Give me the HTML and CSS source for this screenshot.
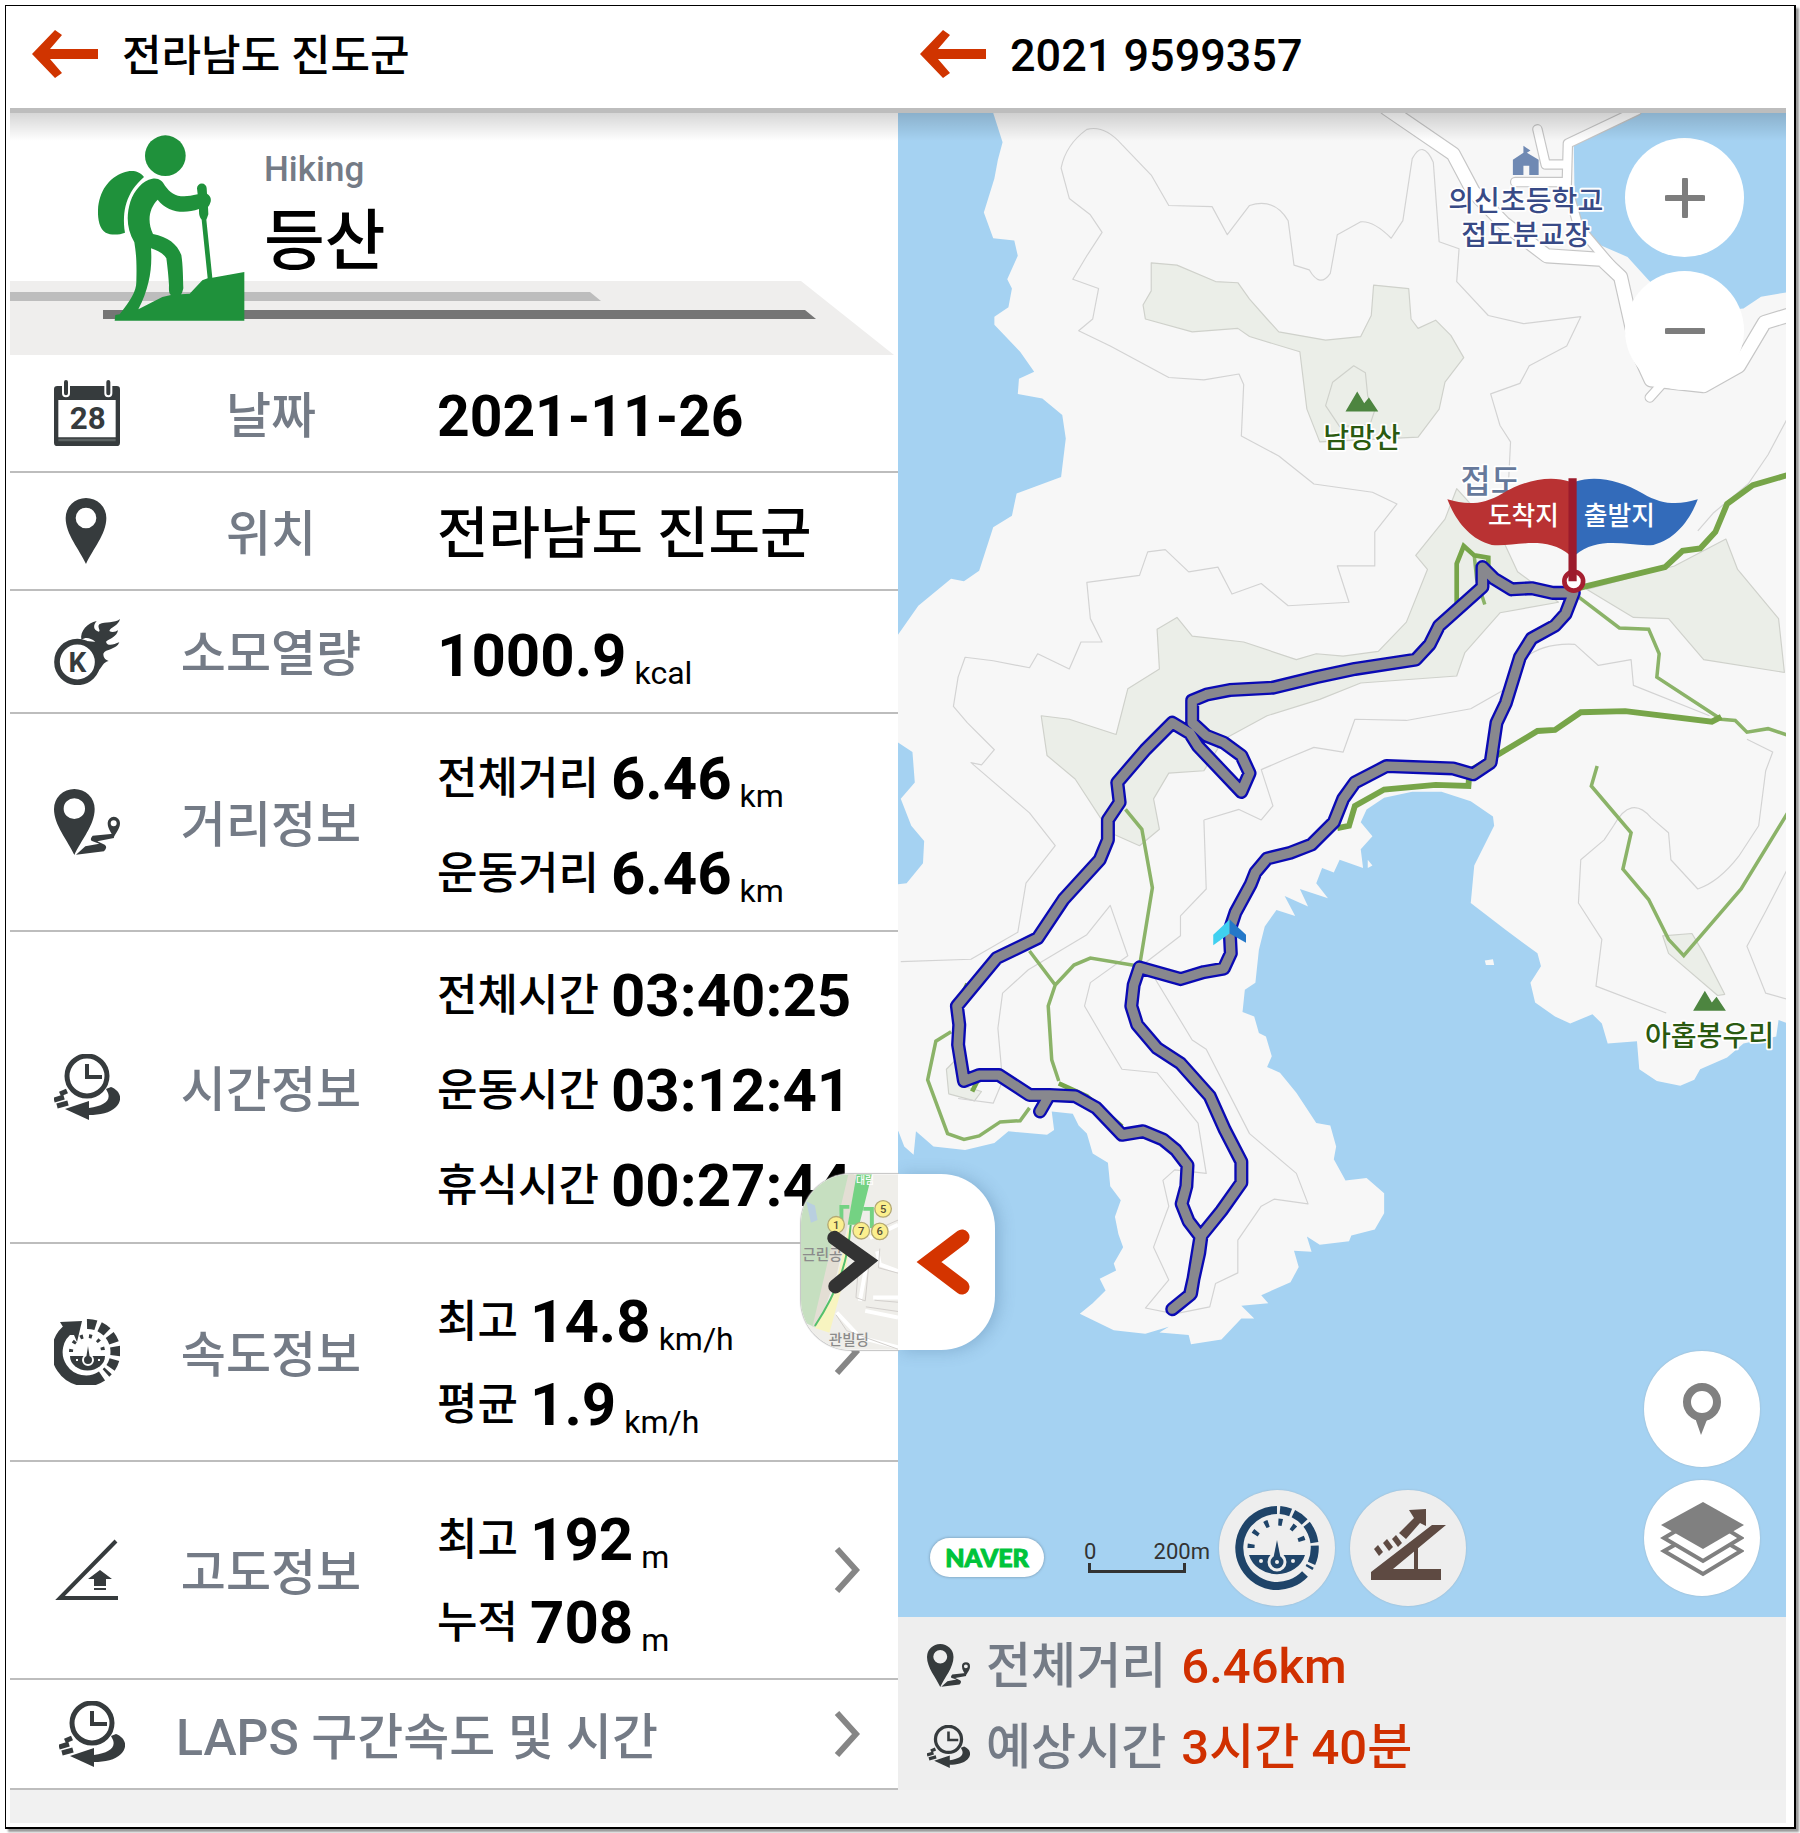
FILE: index.html
```html
<!DOCTYPE html>
<html lang="ko">
  <head>
    <meta charset="UTF-8" />
    <meta name="viewport" content="width=device-width, initial-scale=1" />
    <title>전라남도 진도군</title>
    <link rel="stylesheet" href="styles.css">
  </head>
  <body>
    <svg class="symbols" aria-hidden="true">
      <symbol id="i-back" viewBox="0 0 66 48">
        <path d="M66 19H18L30 5 23 0 0 24 23 48 30 43 18 29H66Z" fill="#d03400"/>
      </symbol>
      <symbol id="i-pin" viewBox="42 381 198 198">
        <path fill-rule="evenodd" d="M138 579C118 535 77 490 77 441a61 60 0 0 1 122 0c0 49-41 94-61 138ZM138 410a31 31 0 1 0 0 62 31 31 0 0 0 0-62Z" fill="#363b3d"/>
      </symbol>
      <symbol id="i-route" viewBox="42 1256 198 198">
        <path fill-rule="evenodd" d="M103 1454C83 1410 42 1365 42 1316a61 60 0 0 1 122 0c0 49-41 94-61 138ZM103 1284a32 31 0 1 0 0 62 32 31 0 0 0 0-62Z" fill="#363b3d"/>
        <path fill-rule="evenodd" d="M221 1402C214 1386 203 1376 203 1358a18 18 0 0 1 37 0c0 18-12 28-19 44ZM221 1350a9 9 0 1 0 0 18 9 9 0 0 0 0-18Z" fill="#363b3d"/>
        <path d="M220 1390 158 1396q-10 12-2 16l22 8-42 8-28 25 84-10q12-14 2-20l-22-10 50-10Z" fill="#363b3d"/>
      </symbol>
      <symbol id="i-clock" viewBox="0 0 66 66">
        <circle cx="33" cy="22" r="20" fill="none" stroke="#363b3d" stroke-width="5"/>
        <path d="M33 10v13h15" fill="none" stroke="#363b3d" stroke-width="4"/>
        <path d="M11 55 35 47v7C49 52 57 47 54 39l-2-4 5-2C67 37 69 46 62 53 56 59 46 61 35 61v5Z" fill="#363b3d"/>
        <path d="M13 37 6 40M10 43 0 46M14 49 3 52" stroke="#363b3d" stroke-width="5"/>
      </symbol>
      <symbol id="i-speed" viewBox="0 0 66 66">
        <path d="M16 9A28 28 0 1 0 48 57" fill="none" stroke="#363b3d" stroke-width="11"/>
        <path d="M6 3 28 2 23 23 20 16 14 16Z" fill="#363b3d"/>
        <path d="M33 5A28 28 0 0 1 52 54" fill="none" stroke="#363b3d" stroke-width="10" stroke-dasharray="9 4"/>
        <path d="M17 33A16 16 0 0 1 49 33" fill="none" stroke="#363b3d" stroke-width="4" stroke-dasharray="3 6"/>
        <path d="M16 37H51A17 14 0 0 1 16 37Z" fill="#363b3d"/>
        <circle cx="34" cy="41" r="5" fill="#363b3d" stroke="#fff" stroke-width="2"/>
        <path d="M32 40 34 27 36 40Z" fill="#363b3d"/>
        <path d="M22 41h2M44 41h2" stroke="#fff" stroke-width="2"/>
      </symbol>
      <symbol id="i-altitude" viewBox="0 0 66 66">
        <path d="M64 61H6L62 4" fill="none" stroke="#363b3d" stroke-width="4"/>
        <path d="M46 33 58 42H52V49H40V42H34ZM40 51h12v2H40Z" fill="#363b3d"/>
      </symbol>
      <symbol id="i-chevron" viewBox="0 0 26 46">
        <path d="M3 2 22 23 3 44" fill="none" stroke="#868686" stroke-width="6"/>
      </symbol>
    </svg>

    <div class="frame">
      <div class="panels">
        <section class="panel">
          <header class="topbar">
            <a href="#" class="back" aria-label="뒤로"><svg><use href="#i-back"/></svg></a>
            <h1>전라남도 진도군</h1>
          </header>
          <div class="hero">
            <svg class="banner" viewBox="0 0 888 74" preserveAspectRatio="none">
              <path d="M0 0H791L884 74H0Z" fill="#efeeed"/>
              <path d="M0 11H580L591 20H0Z" fill="#bdbdbd"/>
              <path d="M93 29H795L806 38H93Z" fill="#757575"/>
            </svg>
            <svg class="hiker" viewBox="50 30 444 558" fill="#1f913b">
              <circle cx="255" cy="92" r="61"/>
              <path d="M191 156C176 136 152 134 128 143 86 158 56 198 53 255 52 285 58 312 76 323 92 331 116 330 134 323 124 258 138 202 191 156Z"/>
              <path d="M216 161C236 158 246 168 254 182 274 210 296 222 352 208L350 190A14 14 0 0 1 379 190L380 206Q394 214 391 230 388 240 383 246L384 268Q380 280 378 284L396 458 492 441V587H103L105 570 118 568C150 525 168 500 168 470 170 400 166 380 162 352 138 310 138 270 150 230 162 196 186 166 216 161ZM232 224C206 250 200 290 218 327 262 336 290 356 303 390 308 420 308 460 309 490 306 500 306 504 302 508L328 506 366 466 382 460 364 284Q355 276 356 252C310 268 262 262 232 224ZM212 370C216 430 208 486 174 553L246 516 272 510C264 504 266 490 266 480 264 450 262 430 258 400 250 386 232 376 212 370Z" fill-rule="evenodd"/>
            </svg>
            <div class="sport">
              <span class="sport-en">Hiking</span>
              <strong class="sport-ko">등산</strong>
            </div>
          </div>

          <ul class="stats">
            <li class="row row-date">
              <svg class="icon" viewBox="42 30 198 198">
                <path d="M42 58q0-10 10-10h178q10 0 10 10v160q0 10-10 10H52q-10 0-10-10Z" fill="#363b3d"/>
                <path d="M55 90h172v112H55Z" fill="#fff"/>
                <path d="M55 210h172" stroke="#5c6363" stroke-width="8"/>
                <path d="M78 36v34M205 36v34" stroke="#fff" stroke-width="24" stroke-linecap="round"/>
                <path d="M78 36v34M205 36v34" stroke="#363b3d" stroke-width="12" stroke-linecap="round"/>
                <text x="143" y="178" font-size="94" font-weight="700" fill="#363b3d" text-anchor="middle">28</text>
              </svg>
              <span class="label">날짜</span>
              <div class="values"><p><b class="date">2021-11-26</b></p></div>
            </li>
            <li class="row row-place">
              <svg class="icon"><use href="#i-pin"/></svg>
              <span class="label">위치</span>
              <div class="values"><p><b class="place">전라남도 진도군</b></p></div>
            </li>
            <li class="row row-kcal">
              <svg class="icon" viewBox="42 744 198 198">
                <circle cx="112" cy="873" r="61" fill="none" stroke="#363b3d" stroke-width="17"/>
                <path d="M124 806C120 780 142 756 170 750 160 762 158 776 176 782 184 780 170 768 178 760 196 750 224 758 240 744 236 764 212 768 208 780 216 786 228 782 234 778 232 796 208 804 198 812 202 828 222 820 238 814 230 836 196 834 190 848 190 862 198 866 206 870 190 872 186 890 172 902L164 850C150 830 140 826 136 816 144 806 156 814 166 812 150 800 138 798 124 806Z" fill="#363b3d"/>
                <text x="112" y="903" font-size="84" font-weight="700" fill="#363b3d" text-anchor="middle">K</text>
              </svg>
              <span class="label">소모열량</span>
              <div class="values"><p><b>1000.9</b> <small>kcal</small></p></div>
            </li>
            <li class="row">
              <svg class="icon"><use href="#i-route"/></svg>
              <span class="label">거리정보</span>
              <div class="values">
                <p><span>전체거리</span> <b>6.46</b> <small>km</small></p>
                <p><span>운동거리</span> <b>6.46</b> <small>km</small></p>
              </div>
            </li>
            <li class="row row-time">
              <svg class="icon"><use href="#i-clock"/></svg>
              <span class="label">시간정보</span>
              <div class="values">
                <p><span>전체시간</span> <b>03:40:25</b></p>
                <p><span>운동시간</span> <b>03:12:41</b></p>
                <p><span>휴식시간</span> <b>00:27:44</b></p>
              </div>
            </li>
            <li class="row">
              <svg class="icon"><use href="#i-speed"/></svg>
              <span class="label">속도정보</span>
              <div class="values tight">
                <p><span>최고</span> <b>14.8</b> <small>km/h</small></p>
                <p><span>평균</span> <b>1.9</b> <small>km/h</small></p>
              </div>
              <a href="#" class="more" aria-label="속도정보"><svg><use href="#i-chevron"/></svg></a>
            </li>
            <li class="row">
              <svg class="icon"><use href="#i-altitude"/></svg>
              <span class="label">고도정보</span>
              <div class="values tight">
                <p><span>최고</span> <b>192</b> <small>m</small></p>
                <p><span>누적</span> <b>708</b> <small>m</small></p>
              </div>
              <a href="#" class="more" aria-label="고도정보"><svg><use href="#i-chevron"/></svg></a>
            </li>
            <li class="row row-laps">
              <svg class="icon"><use href="#i-clock"/></svg>
              <span class="label">LAPS 구간속도 및 시간</span>
              <a href="#" class="more" aria-label="LAPS"><svg><use href="#i-chevron"/></svg></a>
            </li>
          </ul>

          <button type="button" class="tab tab-map" aria-label="지도 보기">
            <svg viewBox="62 38 293 529">
              <rect x="62" y="38" width="293" height="529" fill="#efeeea"/>
              <path d="M62 38H222L105 500 62 480Z" fill="#c6dfc0"/>
              <path d="M78 120 104 132 112 176 92 184Z" fill="#b9cfe0"/>
              <path d="M205 38H236L170 340 124 470 96 500Z" fill="#e3ded4"/>
              <path d="M216 200H205L160 400 104 502 148 516 196 340Z" fill="#f8f4c0"/>
              <path d="M212 190C205 290 180 380 104 496" fill="none" stroke="#54c06c" stroke-width="6"/>
              <path d="M230 38H276L238 190H203Z" fill="#74d283"/>
              <path d="M184 180V136H208M250 142H276V200" fill="none" stroke="#74d283" stroke-width="12"/>
              <path d="M270 230 355 190M262 300 240 420M280 410H355M256 450 355 470M292 270 300 310 355 330M170 455 240 530 355 560" fill="none" stroke="#fff" stroke-width="12"/>
              <path d="M240 260 228 410 256 420 266 320M355 176 300 200M284 418 355 424M258 438 355 452M168 462 200 510 355 566M300 262 296 320 355 336" fill="none" stroke="#d2cfcc" stroke-width="3"/>
              <g fill="#fbef8e" stroke="#b3a873" stroke-width="4">
                <circle cx="310" cy="142" r="25"/><circle cx="168" cy="190" r="25"/><circle cx="244" cy="208" r="25"/><circle cx="300" cy="210" r="25"/>
              </g>
              <g font-size="34" text-anchor="middle" fill="#57503a">
                <text x="310" y="154">5</text><text x="168" y="202">1</text><text x="244" y="220">7</text><text x="300" y="222">6</text>
              </g>
              <g font-size="44" fill="#8b8b8b">
                <text x="66" y="298">근린공</text><text x="146" y="553">관빌딩</text>
                <text x="228" y="68" font-size="30" fill="#fff">대림</text>
              </g>
              <path d="M163 230 260 299 166 376" fill="none" stroke="#333" stroke-width="43" stroke-linecap="round"/>
            </svg>
          </button>
        </section>

        <section class="panel">
          <header class="topbar">
            <a href="#" class="back" aria-label="뒤로"><svg><use href="#i-back"/></svg></a>
            <h1 class="number">2021 9599357</h1>
          </header>
          <div class="map">
            <svg class="chart" viewBox="768 98 760 1285" preserveAspectRatio="xMidYMid slice">
              <!-- land -->
              <path fill="#f7f7f7" d="M850 98 858 123 854 138 851 154 842 183 850 205 868 207 871 220 862 240 866 248 863 264 851 272 851 279 873 302 885 319 872 325 871 338 892 342 909 356 912 376 908 409 870 423 866 442 850 452 838 489 825 498 814 496 786 519 760 556V970L769 968 774 981 782 988 784 968 799 981 826 984 851 978 863 968 896 971 902 967 900 951 918 953 923 963 930 970 935 987 948 995 950 1015 959 1027 954 1041 957 1056 961 1067 953 1081 955 1087 941 1094 946 1104 935 1115 924 1124 953 1138 980 1141 1000 1135 992 1140 1017 1142 1019 1150 1045 1146 1062 1128 1073 1128 1062 1117 1085 1115 1079 1108 1104 1097 1111 1084 1107 1070 1122 1071 1118 1058 1129 1065 1154 1062 1156 1057 1176 1052 1184 1038 1184 1021 1169 1008 1151 1010 1141 992 1143 981 1138 963 1126 961 1109 935 1095 918 1084 913 1088 904 1083 887 1077 884 1073 870 1063 866 1065 847 1074 841 1077 813 1082 793 1092 779 1108 784 1099 767 1119 776 1112 761 1136 769 1126 756 1131 743 1141 747 1146 736 1166 743 1164 727 1174 716 1164 704 1169 693 1184 683 1208 678 1233 678 1258 686 1277 699 1278 707 1261 741 1258 773 1288 796 1315 816 1318 827 1309 841 1313 858 1330 870 1343 876 1362 868 1370 876 1375 893 1400 891 1402 915 1417 925 1437 929 1449 924 1454 915 1477 905 1491 893 1519 887 1521 873 1540 880V249L1529 251 1506 255 1491 265 1440 270 1410 241 1392 221 1362 208 1347 191 1346 123 1370 111 1400 98Z"/>
              <path fill="#a5d2f2" d="M760 632 769 636 781 644 783 670 771 684 780 707 791 720 790 739 776 756 760 758Z"/>
              <path fill="#f7f7f7" d="M1270 822l7-1 1 5-7 0ZM1170 736l4 5-4 2Z"/>
              <!-- woods -->
              <g fill="#ebeee8" stroke="#cfd1cb" stroke-linejoin="round">
                <path d="M985 226 1007 228 1040 242 1059 243 1069 257 1084 274 1094 285 1134 292 1164 289 1173 271 1175 245 1205 248 1207 274 1213 282 1228 275 1241 288 1252 307 1236 328 1231 351 1213 375 1129 379 1118 351 1112 302 1069 289 1059 282 1020 285 980 274 978 262 985 250Z"/>
                <path d="M1246 419 1236 445 1211 476 1221 488 1203 533 1179 558 1149 562 1126 560 1109 565 1064 550 1020 545 1007 529 990 539 992 573 965 590 955 629 915 616 891 613 896 647 920 667 950 713 975 724 992 710 987 684 1000 662 1030 660 1047 633 1084 613 1129 599 1164 585 1246 579 1253 559 1283 525 1333 516 1298 490 1285 462Z"/>
                <path d="M1357 505 1432 485 1476 462 1486 488 1521 530 1526 576 1457 565 1427 530 1397 529Z"/>
                <path d="M1422 801 1447 799 1457 816 1475 851 1469 852 1427 816Z"/>
                <path d="M1134 348 1140 328 1158 314 1168 320 1170 340 1176 352 1172 364 1146 366Z" fill="none"/>
                <path d="M820 905 826 930 840 934 834 942 812 936 810 915Z"/>
              </g>
              <!-- contour lines -->
              <g fill="none" stroke="#d3d3d3" stroke-linejoin="round">
                <path d="M1290 419 1292 379 1283 365 1275 338 1300 329 1308 314 1340 297 1352 272 1303 278 1273 271 1246 242 1248 214 1231 208 1226 140Q1217 120 1208 137L1200 190 1190 205Q1175 190 1164 191L1144 202 1138 235Q1129 248 1120 232L1107 228 1102 190Q1090 170 1069 177L1050 202 1037 178 1000 177 985 151 960 125Q945 108 930 112 912 125 908 145L915 171 933 185 943 200 930 220 918 240 940 248 935 274 923 284 950 297 1000 324 1030 326 1060 321 1064 330 1062 374 1094 391 1124 415 1174 422 1195 432 1176 456 1176 485 1144 485 1154 516 1102 519 1079 500 1054 509 1042 486 1017 490 997 471 982 473 975 493 930 499 933 530 943 550 925 550 915 573 888 560 881 572 850 566 826 563 820 580 816 605 828 619 851 642 840 655 831 653 881 696 903 724 878 756 871 798 831 821 771 823"/>
                <path d="M1293 576Q1310 550 1347 552L1367 570 1395 565 1397 587 1462 613M1030 702 1032 761 1010 784 1010 801 980 824 1020 890 1032 898 1069 970 1109 1004 1119 1030 1090 1026 1079 1032 1059 1061 1059 1089 1040 1098 1035 1118 1005 1124 980 1119 1000 1095 987 1067 1000 1032 995 1010 1005 1001 1032 1004 1025 961 990 918 960 915 945 890 928 861 933 841 965 818 950 775 930 800 880 830 858 850 854 880 858 925 850 944 820 940M1030 702 1060 693 1079 702 1089 690 1079 659 1100 650 1124 640 1149 644 1159 616 1203 617 1258 607 1288 590"/>
                <path d="M1380 707Q1395 680 1412 700L1427 713 1429 736 1452 761Q1470 755 1487 733L1504 707 1510 660 1516 644 1494 633M1380 707 1372 719 1352 736 1350 773 1370 804 1365 844 1425 867M1528 745 1510 780 1494 810 1510 850 1528 855M1528 360 1512 390 1495 415 1465 440 1452 455"/>
              </g>
              <!-- roads -->
              <g fill="none" stroke-linejoin="round" stroke-linecap="round">
                <path stroke="#c6c6c6" stroke-width="13" d="M1186 94 1243 133 1260 165 1286 192 1323 220 1370 223 1386 238 1400 300 1412 326 1457 331 1487 314 1509 277 1532 270"/>
                <path stroke="#c6c6c6" stroke-width="9" d="M1400 96 1341 124 1340 160 1350 195 1378 228M1315 112 1322 142 1340 142M1296 157H1336M1420 331 1411 341"/>
                <path stroke="#fff" stroke-width="11" d="M1186 94 1243 133 1260 165 1286 192 1323 220 1370 223 1386 238 1400 300 1412 326 1457 331 1487 314 1509 277 1532 270"/>
                <path stroke="#fff" stroke-width="7" d="M1400 96 1341 124 1340 160 1350 195 1378 228M1315 112 1322 142 1340 142M1296 157H1336M1420 331 1411 341"/>
              </g>
              <!-- trails -->
              <path fill="none" stroke="#8bb368" stroke-width="3" d="M1347 509 1385 538 1410 539 1419 560 1417 580 1472 616 1484 617 1494 627 1512 624 1530 630M1366 656 1361 673 1395 713 1388 744 1410 770 1427 804 1440 818 1489 761 1530 694M963 693 977 710 986 760 975 827 933 820 919 826 903 843 881 814M903 843 897 861 900 907 906 925M814 883 801 891 794 924 811 970 825 975 838 972 856 960 873 959 881 948M1261 476 1263 496 1270 518"/>
              <path fill="none" stroke="#77a549" stroke-width="5" d="M1530 407 1499 416 1477 432 1467 456 1454 470 1439 472 1424 486 1350 504M1472 614 1464 618 1390 609 1352 610 1330 625 1315 626 1280 647 1257 660 1256 673 1228 672 1184 676 1159 690 1154 707 1144 709"/>
              <path fill="none" stroke="#77a549" stroke-width="4" d="M1246 519V483L1252 468 1261 476 1273 478V490M906 927 930 938 960 964M832 934 838 922 855 922M828 842 822 855"/>
              <!-- recorded track -->
              <g fill="none" stroke-linejoin="round" stroke-linecap="round">
                <path stroke="#0a0ab4" stroke-width="12" d="M1346 508 1328 508 1310 504 1293 505 1278 496 1268 486V503L1231 536 1223 552 1211 565 1159 573 1126 580 1089 589 1052 591 1032 595 1020 600V619L1032 630 1047 636 1062 647 1069 662 1062 678 1025 639 1018 628 1003 619 980 642 956 670 958 687 948 702V719L941 736 910 770 888 803 853 820 819 861 821 877 820 894 825 925 838 920H855L881 937H898L890 951 898 937 920 938 938 948 960 971 978 968 995 975 1006 984 1016 997 1015 1015 1011 1030 1017 1045 1027 1058 1019 1107 1003 1120 1018 1108 1026 1072 1028 1057 1045 1036 1062 1012V994L1048 967 1035 938 1010 910 990 897 973 877 968 861 970 843 975 828 1010 838 1030 832 1047 829 1053 816 1052 796 1057 781 1070 757 1074 747 1084 735 1104 730 1122 723 1141 704 1149 684 1159 670 1186 656 1243 658 1260 663 1275 653 1280 619 1288 602 1300 563 1310 547 1330 536 1339 526 1346 508"/>
                <path stroke="#88888e" stroke-width="8" d="M1346 508 1328 508 1310 504 1293 505 1278 496 1268 486V503L1231 536 1223 552 1211 565 1159 573 1126 580 1089 589 1052 591 1032 595 1020 600V619L1032 630 1047 636 1062 647 1069 662 1062 678 1025 639 1018 628 1003 619 980 642 956 670 958 687 948 702V719L941 736 910 770 888 803 853 820 819 861 821 877 820 894 825 925 838 920H855L881 937H898L890 951 898 937 920 938 938 948 960 971 978 968 995 975 1006 984 1016 997 1015 1015 1011 1030 1017 1045 1027 1058 1019 1107 1003 1120 1018 1108 1026 1072 1028 1057 1045 1036 1062 1012V994L1048 967 1035 938 1010 910 990 897 973 877 968 861 970 843 975 828 1010 838 1030 832 1047 829 1053 816 1052 796 1057 781 1070 757 1074 747 1084 735 1104 730 1122 723 1141 704 1149 684 1159 670 1186 656 1243 658 1260 663 1275 653 1280 619 1288 602 1300 563 1310 547 1330 536 1339 526 1346 508"/>
              </g>
              <path d="M1052 787 1038 800V809L1052 799Z" fill="#3fd0f0"/>
              <path d="M1052 787 1066 800V807L1052 799Z" fill="#2478c8"/>
              <!-- places -->
              <path d="M1151 353 1161 336 1167 346 1171 341 1179 353ZM1448 865 1458 848 1464 858 1468 853 1476 865Z" fill="#4d8540"/>
              <path d="M1294 151V138L1303 132V126L1309 130 1306 132 1316 138V151H1308V143H1303V151Z" fill="#6f89b3"/>
              <g class="place-name" font-size="24" text-anchor="middle">
                <text x="1165" y="384" fill="#2a5a10">남망산</text>
                <text x="1462" y="895" fill="#2a5a10">아홉봉우리</text>
                <text x="1305" y="182" fill="#384a86">의신초등학교</text>
                <text x="1305" y="211" fill="#384a86">접도분교장</text>
                <text x="1275" y="423" font-size="28" fill="#66799b">접도</text>
              </g>
              <!-- flags -->
              <path d="M1343 413C1325 407 1304 412 1285 423 1268 433 1254 433 1238 428 1244 444 1256 462 1276 467 1295 469 1322 458 1343 476Z" fill="#b93233"/>
              <path d="M1347 413C1365 407 1386 412 1405 423 1422 433 1436 433 1452 428 1446 444 1434 462 1414 467 1395 469 1368 458 1347 476Z" fill="#336bba"/>
              <circle cx="1346" cy="498" r="8" fill="#fff" stroke="#a51f30" stroke-width="4"/>
              <path d="M1345 410V498" stroke="#9c1b2c" stroke-width="7"/>
              <g font-size="22" fill="#fff" text-anchor="middle">
                <text x="1303" y="450">도착지</text>
                <text x="1385" y="450">출발지</text>
              </g>
            </svg>

            <div class="controls zoom">
              <button type="button" class="round large" aria-label="확대">
                <svg viewBox="0 0 40 40"><path d="M20 2V38M2 20H38" stroke="#7d7d7d" stroke-width="6" stroke-linecap="round"/></svg>
              </button>
              <button type="button" class="round large" aria-label="축소">
                <svg viewBox="0 0 40 40"><path d="M2 20H38" stroke="#7d7d7d" stroke-width="6" stroke-linecap="round"/></svg>
              </button>
            </div>

            <div class="controls layers">
              <button type="button" class="round" aria-label="현재 위치">
                <svg class="wide" viewBox="0 0 84 84">
                  <path d="M33 45 41 68 50 45Z" fill="#808080"/>
                  <circle cx="42" cy="35" r="15" fill="#fff" stroke="#808080" stroke-width="8"/>
                </svg>
              </button>
              <button type="button" class="round" aria-label="지도 종류">
                <svg class="wide" viewBox="0 0 84 84">
                  <path d="M4 55 43 33 81 55 43 78Z" fill="#fff" stroke="#808080" stroke-width="4"/>
                  <path d="M4 42 43 19 81 42 43 65Z" fill="#fff" stroke="#808080" stroke-width="4"/>
                  <path d="M1 29 43 6 84 29 43 53Z" fill="#808080"/>
                </svg>
              </button>
            </div>

            <div class="legend">
              <a href="#" class="naver">NAVER</a>
              <div class="scale"><span>0</span><span>200m</span></div>
              <button type="button" class="round grey" aria-label="속도">
                <svg class="wide" viewBox="0 0 84 84">
                  <g fill="none" stroke="#1f4469">
                    <path d="M42 4A38 38 0 1 0 70 68" stroke-width="8"/>
                    <path d="M45 4A38 38 0 0 1 74 62" stroke-width="8" stroke-dasharray="11 3 14 3 20 3 18 3"/>
                    <path d="M16 42A26 26 0 0 1 68 42" stroke-width="7" stroke-dasharray="4 10"/>
                  </g>
                  <path d="M14 49H70A29 26 0 0 1 14 49Z" fill="#1f4469"/>
                  <circle cx="42" cy="56" r="8" fill="#1f4469" stroke="#eee" stroke-width="3"/>
                  <path d="M38 54 42 34 46 54Z" fill="#1f4469"/>
                  <g fill="#eee"><circle cx="42" cy="56" r="2"/><circle cx="26" cy="55" r="2"/><circle cx="58" cy="55" r="2"/></g>
                </svg>
              </button>
              <button type="button" class="round grey" aria-label="고도">
                <svg class="wide" viewBox="0 0 84 84">
                  <g fill="#5e4a42">
                    <path d="M5 66 66 19H80L27 63H75V74H5ZM48 40H52V66H48Z"/>
                    <path d="M33 27 48 12 43 4 60 3V20L54 17 40 33Z"/>
                    <path d="M26 33 30 29 36 37 32 41ZM17 37 21 33 27 41 23 45ZM8 43 12 39 17 46 13 50Z"/>
                  </g>
                </svg>
              </button>
            </div>

            <button type="button" class="tab tab-info" aria-label="정보 보기">
              <svg viewBox="0 0 54 66"><path d="M46 8 13 33 46 58" fill="none" stroke="#d43400" stroke-width="15" stroke-linecap="round"/></svg>
            </button>
          </div>
          <footer class="summary">
            <p><svg><use href="#i-route"/></svg><span>전체거리</span><b>6.46km</b></p>
            <p><svg><use href="#i-clock"/></svg><span>예상시간</span><b>3시간 40분</b></p>
          </footer>
        </section>
      </div>
      <div class="bottom"></div>
    </div>
  </body>
</html>
```
FILE: styles.css
```css
* { box-sizing: border-box; }
body {
	margin: 0;
	padding: 5px 4px 5px 5px;
	background: #fff;
	color: #000;
	font-family: Roboto, "Noto Sans CJK KR", sans-serif;
	font-weight: 500;
}
h1, p, ul { margin: 0; padding: 0; }
ul { list-style: none; }
a { text-decoration: none; }
button { padding: 0; border: none; font: inherit; cursor: pointer; }
svg { display: block; }
.symbols { position: absolute; width: 0; height: 0; }

.frame {
	border: 1px solid #000;
	border-right-width: 2px;
	border-bottom-width: 2px;
	padding: 0 8px 4px 4px;
	box-shadow: 3px 3px 2px #999;
}
.panels {
	display: grid;
	grid-template-columns: 1fr 1fr;
}
.panel {
	position: relative;
	display: flex;
	flex-direction: column;
	min-width: 0;
}
.bottom { height: 33px; background: #f1f1f1; }

/* top bar */
.topbar {
	position: relative;
	display: flex;
	align-items: center;
	gap: 24px;
	height: 107px;
	padding: 0 22px 6px;
	border-bottom: 5px solid #bdbdbd;
}
.topbar::after {
	content: "";
	position: absolute;
	z-index: 1;
	left: 0;
	right: 0;
	top: 107px;
	height: 28px;
	background: linear-gradient(rgba(0, 0, 0, 0.16), rgba(0, 0, 0, 0));
}
.topbar h1 {
	padding-top: 4px;
	font-size: 43px;
	font-weight: 500;
	line-height: 56px;
}
.topbar .number { font-size: 45px; }
.back svg { width: 66px; height: 48px; }

/* hero */
.hero {
	position: relative;
	display: flex;
	gap: 19px;
	height: 242px;
	padding: 22px 0 0 87px;
}
.banner {
	position: absolute;
	left: 0;
	bottom: 0;
	width: 100%;
	height: 74px;
}
.hiker { position: relative; width: 148px; height: 186px; }
.sport { position: relative; padding-top: 13px; }
.sport-en {
	display: block;
	color: #747b86;
	font-size: 35px;
	line-height: 44px;
}
.sport-ko {
	display: block;
	font-size: 66px;
	font-weight: 500;
	line-height: 100px;
}

/* stat rows */
.row {
	display: grid;
	grid-template-columns: 66px 302px 1fr auto;
	align-items: center;
	height: 218px;
	padding: 0 38px 0 44px;
	border-bottom: 2px solid #bdbdbd;
}
.row-date, .row-place { height: 118px; }
.row-kcal { height: 123px; }
.row-time { height: 312px; }
.row-laps {
	grid-template-columns: 66px 1fr auto;
	height: 110px;
	padding-left: 49px;
}
.icon { width: 66px; height: 66px; }
.label {
	padding-top: 7px;
	color: #747b86;
	font-size: 49px;
	line-height: 64px;
	text-align: center;
}
.row-laps .label { padding-left: 51px; font-size: 50px; text-align: left; }
.values { padding: 7px 0 0 15px; white-space: nowrap; }
.values p { height: 95px; line-height: 95px; }
.values b { font-size: 60px; font-weight: 700; }
.values .date { font-size: 57px; }
.values .place { font-size: 56px; font-weight: 500; }
.values span { margin-right: 8px; font-size: 44px; vertical-align: 5px; }
.values small { margin-left: 4px; font-size: 32px; font-weight: 400; vertical-align: -8px; }
.tight { padding-top: 22px; }
.tight p { height: 83px; line-height: 83px; }
.more svg { width: 26px; height: 46px; }

/* side tabs over both panels */
.tab {
	position: absolute;
	z-index: 2;
	width: 97px;
	height: 176px;
	overflow: hidden;
	background: #fff;
}
.tab-map {
	top: 1168px;
	right: 0;
	border-radius: 50px 0 0 50px;
	box-shadow: 0 0 1px 1px #c4c4c4;
}
.tab-map svg { width: 97px; height: 176px; }
.tab-info {
	left: 0;
	bottom: 267px;
	padding-left: 18px;
	border-radius: 0 54px 54px 0;
	box-shadow: 4px 1px 16px rgba(60, 100, 140, 0.3);
}
.tab-info svg { width: 54px; height: 66px; }

/* map */
.map {
	position: relative;
	flex: 1;
	min-height: 600px;
	overflow: hidden;
	background: #a5d2f2;
}
.chart {
	position: absolute;
	width: 100%;
	height: 100%;
}
.place-name {
	stroke: #fff;
	stroke-width: 3px;
	stroke-linejoin: round;
	paint-order: stroke;
}
.controls {
	position: absolute;
	display: flex;
	flex-direction: column;
}
.zoom { top: 25px; right: 42px; gap: 14px; }
.layers { right: 26px; bottom: 21px; gap: 13px; }
.round {
	display: grid;
	place-items: center;
	width: 116px;
	height: 116px;
	border-radius: 50%;
	background: #fff;
	box-shadow: 0 0 2px #9bb4c6;
}
.large { width: 119px; height: 119px; box-shadow: none; }
.grey { background: #eee; }
.round svg { width: 40px; height: 40px; }
.round .wide { width: 84px; height: 84px; }
.legend {
	position: absolute;
	left: 32px;
	bottom: 11px;
	display: flex;
	align-items: center;
	gap: 15px;
}
.naver {
	width: 114px;
	height: 39px;
	margin: 18px 29px 0 0;
	border-radius: 20px;
	background: #fff;
	box-shadow: 0 0 3px #6f8da5;
	color: #00c43b;
	font: 900 25px/39px Lato, sans-serif;
	text-align: center;
	-webkit-text-stroke: 1px #00c43b;
}
.scale {
	display: flex;
	justify-content: space-between;
	width: 98px;
	height: 32px;
	margin: 18px 18px 0 0;
	color: #333;
	font-size: 22px;
	font-weight: 400;
	line-height: 22px;
	background:
		linear-gradient(#333, #333) 0 29px / 98px 3px no-repeat,
		linear-gradient(#333, #333) 0 22px / 3px 10px no-repeat,
		linear-gradient(#333, #333) 95px 22px / 3px 10px no-repeat;
}
.scale span:last-child { margin-right: -24px; }
.scale span:first-child { margin-left: -4px; }

/* summary under the map */
.summary {
	height: 173px;
	padding: 8px 0 0 29px;
	background: #eee;
}
.summary p {
	display: flex;
	align-items: center;
	height: 81px;
	color: #747b86;
	font-size: 49px;
	line-height: 81px;
}
.summary svg { width: 43px; height: 43px; margin-right: 16px; }
.summary span, .summary b { padding-top: 2px; }
.summary b {
	margin-left: 15px;
	color: #d03000;
	font-weight: 500;
}
```
